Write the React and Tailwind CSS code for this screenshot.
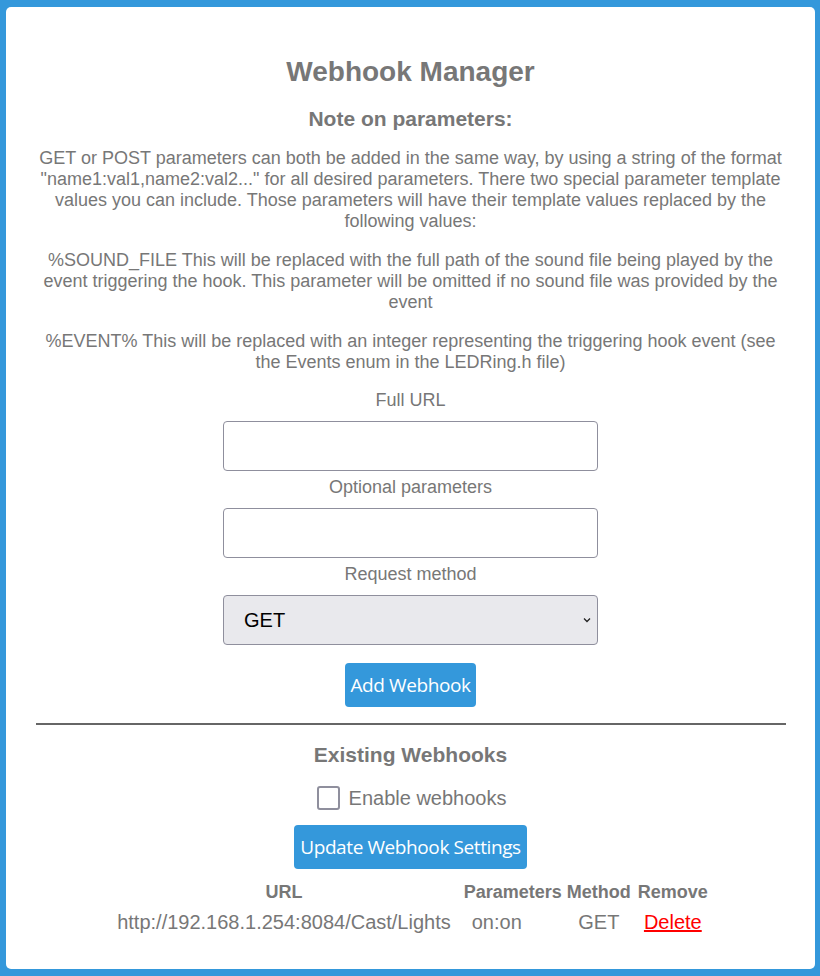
import React from 'react';

const inputCls = 'w-[375px] h-[50px] rounded-[4px] border border-[#8f8f9d] bg-white';
const btnCls = 'bg-[#3498db] text-white rounded-[4px] px-[5px] h-[44px] whitespace-nowrap text-[19px] font-["Open_Sans",sans-serif] tracking-[-0.4px]';

const App = () => {
  return (
    <div className="min-h-[976px] bg-[#3498db] pt-[7px] pb-[7px] pl-[6px] pr-[5px] font-['Liberation_Sans',Arial,sans-serif] text-[#777]">
      <div className="bg-white rounded-[5px] h-[962px] flex flex-col items-center text-center">
        <h1 className="mt-[49px] text-[28px] font-bold leading-[32px]">Webhook Manager</h1>
        <h3 className="mt-[19px] text-[21px] font-bold leading-[24px]">Note on parameters:</h3>
        <div className="mt-[17px] px-[28px] text-[18px] leading-[21px]">
          <p>
            GET or POST parameters can both be added in the same way, by using a string of the format
            "name1:val1,name2:val2..." for all desired parameters. There two special parameter template
            values you can include. Those parameters will have their template values replaced by the
            following values:
          </p>
          <p className="mt-[18px]">
            %SOUND_FILE This will be replaced with the full path of the sound file being played by the
            event triggering the hook. This parameter will be omitted if no sound file was provided by the
            event
          </p>
          <p className="mt-[18px]">
            %EVENT% This will be replaced with an integer representing the triggering hook event (see
            the Events enum in the LEDRing.h file)
          </p>
        </div>

        <label className="mt-[17px] text-[18px] leading-[21px]">Full URL</label>
        <input className={`${inputCls} mt-[10px]`} />
        <label className="mt-[6px] text-[18px] leading-[21px]">Optional parameters</label>
        <input className={`${inputCls} mt-[10px]`} />
        <label className="mt-[6px] text-[18px] leading-[21px]">Request method</label>
        <div className="relative mt-[10px] w-[375px] h-[50px] rounded-[4px] border border-[#8f8f9d] bg-[#e9e9ed] flex items-center pl-[20px] text-black text-[20px]">
          GET
          <svg className="absolute right-[5px] top-[19px]" width="10" height="10" viewBox="0 0 10 10">
            <path d="M2 3.5 L5 6.5 L8 3.5" fill="none" stroke="#222" strokeWidth="1.3" />
          </svg>
        </div>
        <button className={`${btnCls} mt-[18px]`}>Add Webhook</button>

        <hr className="mt-[16px] w-[750px] border-0 border-t-2 border-[#666]" />
        <h3 className="mt-[18px] text-[21px] font-bold leading-[24px]">Existing Webhooks</h3>
        <label className="mt-[19px] flex items-center gap-[9px] text-[20px] leading-[24px] translate-x-[1px]">
          <span className="w-[23px] h-[24px] rounded-[3px] border-2 border-[#8f8f9d] bg-white" />
          Enable webhooks
        </label>
        <button className={`${btnCls} mt-[15px] px-[6px] tracking-[-0.3px]`}>Update Webhook Settings</button>

        <table className="mt-[12px] border-separate border-spacing-x-[5px]">
          <thead>
            <tr className="text-[18px] font-bold leading-[22px]">
              <th className="px-[4px]">URL</th>
              <th className="pl-[4px]">Parameters</th>
              <th className="px-0">Method</th>
              <th className="pl-[2px]">Remove</th>
            </tr>
          </thead>
          <tbody>
            <tr className="text-[20px] leading-[30px]">
              <td className="px-[4px] pt-[4px]">http://192.168.1.254:8084/Cast/Lights</td>
              <td className="text-left pl-[12px] pt-[4px]">on:on</td>
              <td className="pt-[4px]">GET</td>
              <td className="pt-[4px] pl-[2px]">
                <a href="#" className="text-[#ff0000] underline">Delete</a>
              </td>
            </tr>
          </tbody>
        </table>
      </div>
    </div>
  );
};

export default App;
